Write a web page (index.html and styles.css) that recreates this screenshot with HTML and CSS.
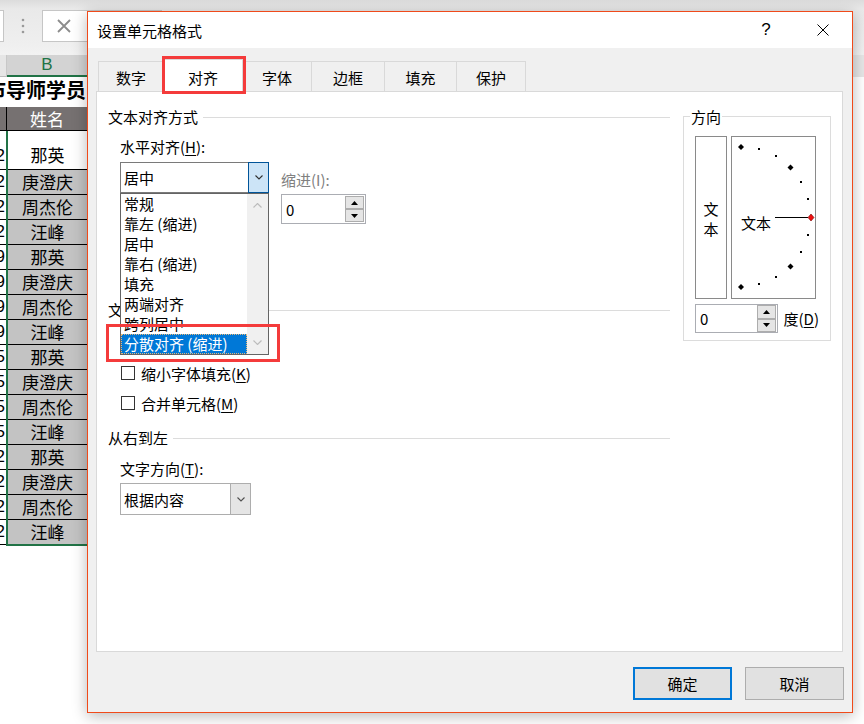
FILE: index.html
```html
<!DOCTYPE html>
<html lang="zh-CN">
<head>
<meta charset="utf-8">
<title>设置单元格格式</title>
<link rel="stylesheet" href="styles.css">
</head>
<body>
<div class="excel">
  <div class="xl-bar">
    <div class="namebox"></div>
    <div class="grip"><svg width="4" height="16" viewBox="0 0 4 16"><circle cx="2" cy="2" r="1.3"/><circle cx="2" cy="8" r="1.3"/><circle cx="2" cy="14" r="1.3"/></svg></div>
    <div class="fxbox"><svg class="fx-x" width="14" height="14" viewBox="0 0 14 14"><path d="M1 1L13 13M13 1L1 13"/></svg></div>
  </div>
  <div class="xl-cols"><div class="colhdr-a"></div><div class="colhdr-b">B</div></div>
  <div class="xl-title"><span>市导师学员</span></div>
  <div class="xl-head"><div class="ha"></div><div class="hb">姓名</div></div>
  <div class="xl-body">
    <div class="col-a">
      <div class="ca first"><span>2</span></div>
      <div class="ca"><span>2</span></div>
      <div class="ca"><span>2</span></div>
      <div class="ca"><span>2</span></div>
      <div class="ca"><span>9</span></div>
      <div class="ca"><span>9</span></div>
      <div class="ca"><span>9</span></div>
      <div class="ca"><span>9</span></div>
      <div class="ca"><span>5</span></div>
      <div class="ca"><span>5</span></div>
      <div class="ca"><span>5</span></div>
      <div class="ca"><span>5</span></div>
      <div class="ca"><span>2</span></div>
      <div class="ca"><span>2</span></div>
      <div class="ca"><span>2</span></div>
      <div class="ca"><span>2</span></div>
    </div>
    <div class="col-b">
      <div class="cb first">那英</div>
      <div class="cb">庚澄庆</div>
      <div class="cb">周杰伦</div>
      <div class="cb">汪峰</div>
      <div class="cb">那英</div>
      <div class="cb">庚澄庆</div>
      <div class="cb">周杰伦</div>
      <div class="cb">汪峰</div>
      <div class="cb">那英</div>
      <div class="cb">庚澄庆</div>
      <div class="cb">周杰伦</div>
      <div class="cb">汪峰</div>
      <div class="cb">那英</div>
      <div class="cb">庚澄庆</div>
      <div class="cb">周杰伦</div>
      <div class="cb last">汪峰</div>
    </div>
  </div>
</div>

<div class="dialog">
  <div class="titlebar">
    <div class="title">设置单元格格式</div>
    <div class="tb-btn help">?</div>
    <div class="tb-btn close"><svg width="12" height="12" viewBox="0 0 12 12"><path d="M0.5 0.5L11.5 11.5M11.5 0.5L0.5 11.5"/></svg></div>
  </div>
  <div class="dlg-body">
    <div class="tabs">
      <div class="tab w1">数字</div>
      <div class="tab w2 active">对齐</div>
      <div class="tab w3">字体</div>
      <div class="tab w4">边框</div>
      <div class="tab w5">填充</div>
      <div class="tab w6">保护</div>
    </div>
    <div class="panel">
      <div class="lc">
        <div class="grp"><span>文本对齐方式</span><span class="rule"></span></div>
        <div class="ind">
          <div class="lbl lbl-h">水平对齐(<span class="u">H</span>):</div>
          <div class="align-row">
            <div class="combo-wrap">
              <div class="combo focus">
                <span class="val">居中</span>
                <span class="cbtn"><svg width="8" height="5" viewBox="0 0 8 5"><path d="M0.5 0.5L4 4L7.5 0.5"/></svg></span>
              </div>
              <div class="dropdown">
                <div class="items">
                  <div class="item">常规</div>
                  <div class="item">靠左 (缩进)</div>
                  <div class="item">居中</div>
                  <div class="item">靠右 (缩进)</div>
                  <div class="item">填充</div>
                  <div class="item">两端对齐</div>
                  <div class="item">跨列居中</div>
                  <div class="item sel">分散对齐 (缩进)</div>
                </div>
                <div class="sb">
                  <svg width="9" height="5" viewBox="0 0 9 5"><path d="M0.5 4.5L4.5 0.5L8.5 4.5"/></svg>
                  <svg width="9" height="5" viewBox="0 0 9 5"><path d="M0.5 0.5L4.5 4.5L8.5 0.5"/></svg>
                </div>
              </div>
            </div>
            <div class="indent-grp">
              <div class="lbl dis">缩进(I):</div>
              <div class="spin">
                <span class="v">0</span>
                <span class="sbtns">
                  <span class="sbtn"><svg width="7" height="4" viewBox="0 0 7 4"><path d="M0 4L3.5 0L7 4Z"/></svg></span>
                  <span class="sbtn"><svg width="7" height="4" viewBox="0 0 7 4"><path d="M0 0L7 0L3.5 4Z"/></svg></span>
                </span>
              </div>
            </div>
          </div>
        </div>
        <div class="grp grp-ctrl"><span>文</span><span class="rule"></span></div>
        <div class="ind chk-list">
          <div class="chk"><span class="box"></span><span>缩小字体填充(<span class="u">K</span>)</span></div>
          <div class="chk"><span class="box"></span><span>合并单元格(<span class="u">M</span>)</span></div>
        </div>
        <div class="grp grp-rtl"><span>从右到左</span><span class="rule"></span></div>
        <div class="ind">
          <div class="lbl lbl-t">文字方向(<span class="u">T</span>):</div>
          <div class="combo combo2">
            <span class="val">根据内容</span>
            <span class="cbtn"><svg width="8" height="5" viewBox="0 0 8 5"><path d="M0.5 0.5L4 4L7.5 0.5"/></svg></span>
          </div>
        </div>
      </div>
      <div class="rc">
        <div class="dirbox">
          <div class="legend">方向</div>
          <div class="dir-row">
            <div class="vtext"><span>文<br>本</span></div>
            <div class="arc">
              <svg width="83" height="161" viewBox="0 0 83 161">
                <g class="dots">
                  <polygon points="9,7 12,10 9,13 6,10"/>
                  <rect x="26" y="11" width="2" height="2"/>
                  <rect x="43" y="18" width="2" height="2"/>
                  <polygon points="58.5,27.5 61.5,30.5 58.5,33.5 55.5,30.5"/>
                  <rect x="68" y="44" width="2" height="2"/>
                  <rect x="75" y="61" width="2" height="2"/>
                  <rect x="75" y="97" width="2" height="2"/>
                  <rect x="68" y="114" width="2" height="2"/>
                  <polygon points="58.5,126.5 61.5,129.5 58.5,132.5 55.5,129.5"/>
                  <rect x="43" y="139" width="2" height="2"/>
                  <rect x="26" y="146" width="2" height="2"/>
                  <polygon points="9,147 12,150 9,153 6,150"/>
                </g>
                <path class="needle" d="M43 80.5H76"/>
                <polygon class="red" points="79,77 82,80.5 79,84 76,80.5"/>
                <text class="arc-txt" x="9" y="85" dominant-baseline="central">文本</text>
              </svg>
            </div>
          </div>
          <div class="deg-row">
            <div class="spin spin2">
              <span class="v">0</span>
              <span class="sbtns">
                <span class="sbtn"><svg width="7" height="4" viewBox="0 0 7 4"><path d="M0 4L3.5 0L7 4Z"/></svg></span>
                <span class="sbtn"><svg width="7" height="4" viewBox="0 0 7 4"><path d="M0 0L7 0L3.5 4Z"/></svg></span>
              </span>
            </div>
            <span class="deg">度(<span class="u">D</span>)</span>
          </div>
        </div>
      </div>
    </div>
    <div class="btn-row">
      <div class="btn primary">确定</div>
      <div class="btn">取消</div>
    </div>
  </div>
  <div class="mark mark-tab"></div>
  <div class="mark mark-item"></div>
</div>
</body>
</html>
```
FILE: styles.css
```css
* { box-sizing: border-box; }
body {
  margin: 0;
  width: 864px;
  height: 724px;
  overflow: hidden;
  position: relative;
  background: #fff;
  font-family: "Noto Sans CJK SC", "Noto Sans", sans-serif;
  font-size: 15px;
  color: #000;
}

/* Excel background */
.xl-bar {
  height: 55px;
  background: linear-gradient(#dcdcdc 0, #e9e9e9 9px, #efefef 44px, #f2f2f2 100%);
  display: flex;
  align-items: flex-start;
  padding-top: 10px;
}
.namebox { width: 4px; height: 32px; background: #fff; border: 1px solid #c6c6c6; border-left: none; }
.grip { width: 38px; height: 32px; display: flex; align-items: center; justify-content: center; fill: #9a9a9a; }
.fxbox { width: 120px; height: 32px; background: #fff; border: 1px solid #c6c6c6; display: flex; align-items: center; padding-left: 14px; }
.fx-x path { stroke: #8c8c8c; stroke-width: 1.8; fill: none; }

.xl-cols { height: 22px; background: #e6e6e6; display: flex; }
.colhdr-a { width: 7px; border-right: 1px solid #c8c8c8; border-bottom: 1px solid #bdbdbd; }
.colhdr-b {
  width: 80px; background: #d3d3d3; border-bottom: 2px solid #217346;
  color: #217346; font-family: "Liberation Sans", sans-serif; font-size: 17px;
  line-height: 20px; text-align: center;
}
.xl-title {
  width: 87px; height: 30px; display: flex; justify-content: flex-end; overflow: hidden;
  font-weight: bold; font-size: 20px; line-height: 26px; white-space: nowrap; padding-right: 1px;
}
.xl-title span { flex-shrink: 0; }
.xl-head { height: 24px; display: flex; background: #767171; border-bottom: 1px solid #000; width: 87px; }
.ha { width: 7px; border-right: 1px solid #000; }
.hb { width: 80px; color: #fff; font-size: 17px; text-align: center; line-height: 23px; }
.xl-body { display: flex; }
.col-a { width: 6px; }
.ca {
  height: 25px; border-bottom: 1px solid #000; overflow: hidden; display: flex;
  justify-content: flex-end; align-items: center; padding-right: 1px;
  font-family: "Liberation Sans", sans-serif; font-size: 17px;
}
.ca span { flex-shrink: 0; }
.col-b { width: 81px; border-left: 2px solid #217346; border-bottom: 2px solid #217346; }
.cb {
  height: 25px; border-bottom: 1px solid #000; background: #c3c3c3; display: flex;
  align-items: center; justify-content: center; font-size: 17px; line-height: 22px; white-space: nowrap;
}
.cb.last { border-bottom: none; height: 24px; }
.ca.first, .cb.first { height: 39px; align-items: flex-end; padding-bottom: 3px; }
.cb.first { background: #fff; }

/* Dialog */
.dialog {
  position: absolute; left: 87px; top: 11px; width: 766px; height: 702px;
  border: 1px solid #f04a1a; background: #f0f0f0;
  box-shadow: 0 3px 14px rgba(0, 0, 0, .28);
  display: flex; flex-direction: column; z-index: 2;
}
.titlebar { height: 36px; background: #fff; display: flex; align-items: center; flex-shrink: 0; padding-right: 6px; }
.title { flex: 1; padding-left: 9px; font-size: 15px; }
.tb-btn { width: 46px; height: 36px; display: flex; align-items: center; justify-content: center; }
.help { font-family: "Liberation Sans", sans-serif; font-size: 17px; margin-right: 11px; }
.close path { stroke: #000; stroke-width: 1; fill: none; }

.dlg-body { flex: 1; padding: 11px 9px 0 8px; display: flex; flex-direction: column; }
.tabs { height: 32px; display: flex; align-items: flex-end; margin-left: 2px; flex-shrink: 0; }
.tab {
  height: 30px; border: 1px solid #d9d9d9; border-bottom: none; background: #f0f0f0;
  display: flex; align-items: center; justify-content: center; padding-top: 2px; margin-left: -1px;
}
.tab:first-child { margin-left: 0; }
.tab.active { height: 33px; margin-bottom: -1px; background: #fff; position: relative; z-index: 1; }
.w1 { width: 66px; } .w2 { width: 80px; } .w3 { width: 70px; }
.w4 { width: 74px; } .w5 { width: 73px; } .w6 { width: 70px; }

.panel {
  height: 561px; background: #fff; border: 1px solid #d9d9d9; display: flex;
  padding: 15px 0 0 11px; flex-shrink: 0;
}
.lc { width: 562px; }
.rc { width: 148px; margin-left: 13px; }

.grp { display: flex; align-items: center; height: 20px; line-height: 20px; white-space: nowrap; }
.grp .rule { flex: 1; height: 1px; background: #dcdcdc; margin-left: 5px; }
.ind { padding-left: 12px; }
.lbl { height: 20px; line-height: 20px; white-space: nowrap; }
.u { text-decoration: underline; text-underline-offset: 2px; }
.lbl-h { margin-top: 10px; }
.align-row { display: flex; margin-top: 5px; height: 62px; }
.combo-wrap { position: relative; width: 149px; height: 31px; }
.combo { width: 149px; height: 31px; border: 1px solid #adadad; background: #fff; display: flex; align-items: center; }
.combo.focus { border-color: #7a7a7a; }
.combo .val { flex: 1; padding-left: 3px; white-space: nowrap; }
.cbtn {
  align-self: stretch; width: 21px; margin: -1px -1px -1px 0; display: flex; align-items: center;
  justify-content: center; border: 1px solid #adadad; background: #e5e5e5;
}
.cbtn path { fill: none; stroke: #505050; stroke-width: 1.1; }
.combo.focus .cbtn { border-color: #005499; background: #cce4f7; }
.combo.focus .cbtn path { stroke: #303030; }
.dropdown {
  position: absolute; top: 31px; left: 0; width: 149px; z-index: 5;
  border: 1px solid #646464; background: #fff; display: flex;
}
.items { flex: 1; }
.item { height: 20px; line-height: 20px; padding-left: 3px; white-space: nowrap; }
.item.sel { background: #0078d7; color: #fff; outline: 1px dotted #e9b878; outline-offset: -1px; }
.sb {
  width: 21px; background: #f0f0f0; display: flex; flex-direction: column;
  justify-content: space-between; align-items: center; padding: 9px 0;
}
.sb path { fill: none; stroke: #bcbcbc; stroke-width: 1.2; }
.indent-grp { margin-left: 12px; padding-top: 8px; }
.lbl.dis { color: #808080; }
.spin {
  width: 85px; height: 30px; border: 1px solid #abadb3; display: flex; align-items: center;
  padding: 1px 1px 1px 4px; background: #fff; margin-top: 4px;
}
.spin .v { flex: 1; }
.sbtns { width: 19px; display: flex; flex-direction: column; justify-content: center; align-self: stretch; }
.sbtn {
  height: 13px; border: 1px solid #adadad; background: #e5e5e5; display: flex;
  align-items: center; justify-content: center;
}
.sbtn path { fill: #000; }

.grp-ctrl { margin-top: 76px; }
.chk-list { margin-top: 43px; display: flex; flex-direction: column; gap: 10px; }
.chk { display: flex; align-items: center; height: 20px; gap: 6px; white-space: nowrap; }
.box { width: 14px; height: 14px; border: 1px solid #333; background: #fff; margin-left: 1px; }
.grp-rtl { margin-top: 15px; }
.lbl-t { margin-top: 11px; }
.combo2 { width: 131px; height: 32px; margin-top: 4px; }

.dirbox { margin-top: 9px; border: 1px solid #dcdcdc; padding: 0 11px 6px; height: 225px; }
.legend {
  margin-top: -10px; margin-left: -5px; height: 20px; line-height: 20px;
  background: #fff; width: max-content; padding: 0 1px;
}
.dir-row { display: flex; gap: 4px; margin-top: 9px; height: 163px; }
.vtext { width: 32px; border: 1px solid #8a8a8a; display: flex; align-items: center; justify-content: center; }
.vtext span { line-height: 20px; text-align: center; margin-top: 3px; }
.arc { width: 85px; border: 1px solid #8a8a8a; }
.arc svg { display: block; }
.dots polygon, .dots rect { fill: #000; }
.needle { stroke: #000; stroke-width: 1; fill: none; }
.red { fill: #ee1111; stroke: #700; stroke-width: 0.6; }
.arc-txt { font-size: 15px; fill: #000; font-family: "Noto Sans CJK SC", sans-serif; }
.deg-row { display: flex; align-items: center; margin-top: 5px; }
.spin2 { width: 84px; height: 29px; margin-top: 0; padding: 0 1px 0 4px; }
.spin2 .sbtn { height: 13.5px; }
.deg { margin-left: 6px; white-space: nowrap; }

.btn-row { display: flex; justify-content: flex-end; gap: 13px; margin-top: 15px; margin-right: -1px; }
.btn {
  width: 99px; height: 33px; background: #e1e1e1; border: 1px solid #adadad;
  display: flex; align-items: center; justify-content: center;
}
.btn.primary { border: 2px solid #0078d7; }

.mark { position: absolute; border: 3px solid #f43b3b; z-index: 10; pointer-events: none; }
.mark-tab { left: 74px; top: 44px; width: 84px; height: 38px; }
.mark-item { left: 18px; top: 312px; width: 174px; height: 38px; }
```
